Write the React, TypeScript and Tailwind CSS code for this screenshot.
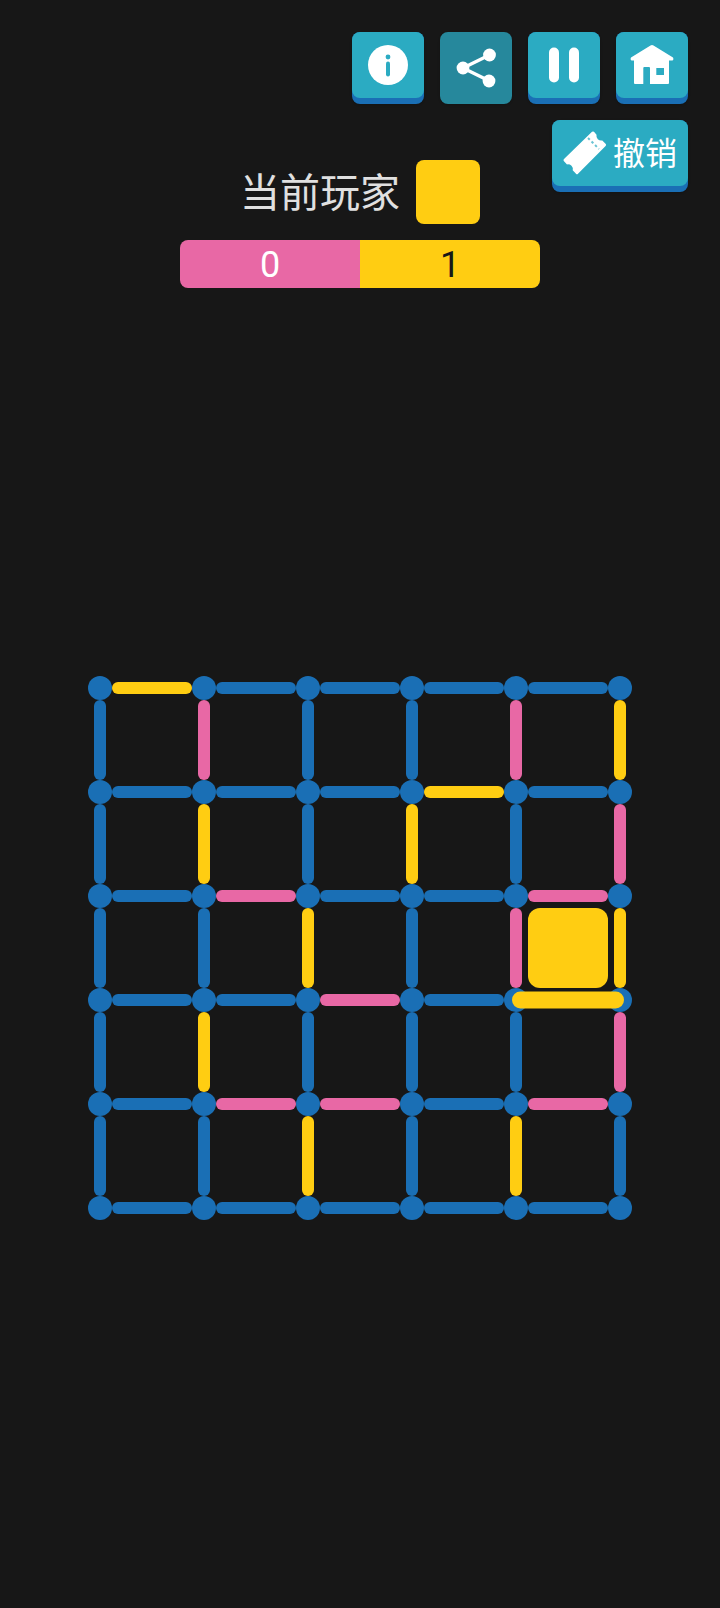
import React from "react";

type Mark = "b" | "p" | "y" | "last";

const horizontal: Mark[][] = [
  ["y", "b", "b", "b", "b"],
  ["b", "b", "b", "y", "b"],
  ["b", "p", "b", "b", "p"],
  ["b", "b", "p", "b", "last"],
  ["b", "p", "p", "b", "p"],
  ["b", "b", "b", "b", "b"],
];

const vertical: Mark[][] = [
  ["b", "p", "b", "b", "p", "y"],
  ["b", "y", "b", "y", "b", "p"],
  ["b", "b", "y", "b", "p", "y"],
  ["b", "y", "b", "b", "b", "p"],
  ["b", "b", "y", "b", "y", "b"],
];

const lineColor: Record<Mark, string> = {
  b: "bg-[#1a6fb5]",
  p: "bg-[#e868a5]",
  y: "bg-[#ffcd12]",
  last: "bg-[#ffcd12] scale-[1.4] relative z-10",
};

function GameButton({ children, dim }: { children: React.ReactNode; dim?: boolean }) {
  if (dim) {
    return (
      <button className="flex h-[72px] w-[72px] items-center justify-center rounded-lg bg-[#26889c] shadow-sm">
        {children}
      </button>
    );
  }
  return (
    <button className="h-[72px] w-[72px] rounded-lg bg-[#1a6fb5] pb-1.5 shadow-sm">
      <div className="flex h-full items-center justify-center rounded-lg bg-[#2babc2]">{children}</div>
    </button>
  );
}

function InfoIcon() {
  return (
    <svg width="40" height="40" viewBox="0 0 40 40">
      <circle cx="20" cy="20" r="20" fill="#fff" />
      <circle cx="20" cy="12" r="2.4" fill="#2babc2" />
      <rect x="18" y="16.500" width="4" height="15" rx="2" fill="#2babc2" />
    </svg>
  );
}

function ShareIcon() {
  return (
    <svg width="40" height="40" viewBox="0 0 40 40">
      <path d="M33.500 7 7 20l26.500 13" fill="none" stroke="#fff" strokeWidth="3.4" />
      <circle cx="33.500" cy="7" r="6.400" fill="#fff" />
      <circle cx="7" cy="20" r="6.400" fill="#fff" />
      <circle cx="33" cy="33" r="6.400" fill="#fff" />
    </svg>
  );
}

function PauseIcon() {
  return (
    <svg width="30" height="36" viewBox="0 0 30 36">
      <rect x="0" y="0.500" width="10" height="35" rx="5" fill="#fff" />
      <rect x="20" y="0.500" width="10" height="35" rx="5" fill="#fff" />
    </svg>
  );
}

function HomeIcon() {
  return (
    <svg width="44" height="40" viewBox="0 0 44 40">
      <path
        fillRule="evenodd"
        fill="#fff"
        d="M20.500.500q1.500-.8 3 0L43 12.500q1 2-.6 3H39V38q0 1-1 1H20V23q0-1-1-1H14.300q-1 0-1 1V39H5q-1 0-1-1V15.500H1.600q-1.600-1-.6-3ZM26.300 23v7H34v-7Z"
      />
    </svg>
  );
}

function TicketIcon() {
  return (
    <svg width="44" height="44" viewBox="0 0 44 44">
      <path
        fill="#fff"
        d="M29 .800q1-.8 2 0l2.500 3q-.5 2.700 1.300 4.400t4.500 1.300l3.500 3.500q.8 1-.2 2L15 42.800q-1 1-2 0l-3.300-3.600q.6-2.600-1.200-4.400t-4.500-1.400L.800 30q-.8-1 .2-2Z"
      />
      <path d="M25 7l11 11" stroke="#2babc2" strokeWidth="2" strokeDasharray="2.500 2.500" opacity="0.7" />
    </svg>
  );
}

export default function App() {
  return (
    <div
      className="flex min-h-screen flex-col bg-[#171717]"
      style={{ fontFamily: '"Noto Sans CJK SC", Roboto, sans-serif' }}
    >
      <div className="flex flex-col items-end gap-4 pt-8 pr-8">
        <div className="flex gap-4">
          <GameButton>
            <InfoIcon />
          </GameButton>
          <GameButton dim>
            <ShareIcon />
          </GameButton>
          <GameButton>
            <PauseIcon />
          </GameButton>
          <GameButton>
            <HomeIcon />
          </GameButton>
        </div>
        <button className="h-[72px] w-[136px] rounded-lg bg-[#1a6fb5] pb-1.5 shadow-sm">
          <div className="flex h-full items-center justify-center gap-1.5 rounded-lg bg-[#2babc2]">
            <TicketIcon />
            <span className="-mt-1 text-[32px] leading-none text-white">撤销</span>
          </div>
        </button>
      </div>

      <div className="-mt-8 flex flex-col items-center gap-4">
        <div className="flex items-center gap-4">
          <span className="-mt-1 text-[40px] leading-none text-[#e0e0e0]">当前玩家</span>
          <div className="h-16 w-16 rounded-lg bg-[#ffcd12]" />
        </div>
        <div className="flex h-12 w-[360px] font-['Roboto'] text-[36px] leading-none">
          <div className="flex flex-1 items-center justify-center rounded-l-lg bg-[#e868a5] pt-0.5 text-white">0</div>
          <div className="flex flex-1 items-center justify-center rounded-r-lg bg-[#ffcd12] pt-0.5 text-[#171717]">1</div>
        </div>
      </div>

      <div className="flex flex-1 items-center justify-center">
        <div className="flex flex-col">
          {horizontal.map((row, r) => (
            <React.Fragment key={r}>
              <div className="flex items-center">
                {row.map((mark, c) => (
                  <React.Fragment key={c}>
                    <div className="h-6 w-6 rounded-full bg-[#1a6fb5]" />
                    <div className={`h-3 w-20 rounded-full ${lineColor[mark]}`} />
                  </React.Fragment>
                ))}
                <div className="h-6 w-6 rounded-full bg-[#1a6fb5]" />
              </div>
              {r < vertical.length && (
                <div className="flex h-20">
                  {vertical[r].map((mark, c) => (
                    <React.Fragment key={c}>
                      <div className="flex w-6 justify-center">
                        <div className={`h-20 w-3 rounded-full ${lineColor[mark]}`} />
                      </div>
                      {c < 5 &&
                        (r === 2 && c === 4 ? (
                          <div className="h-20 w-20 rounded-xl bg-[#ffcd12]" />
                        ) : (
                          <div className="w-20" />
                        ))}
                    </React.Fragment>
                  ))}
                </div>
              )}
            </React.Fragment>
          ))}
        </div>
      </div>
    </div>
  );
}
